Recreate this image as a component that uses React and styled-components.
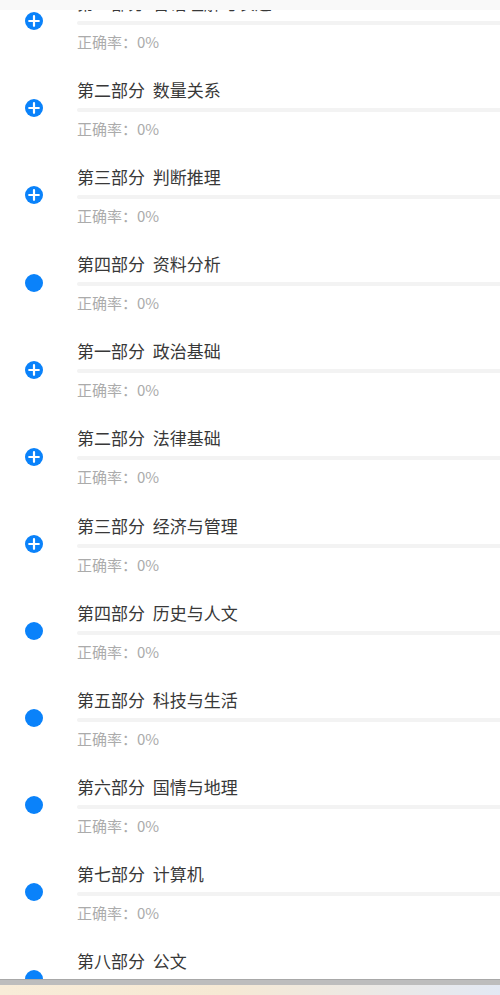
import React from 'react'
import styled, { createGlobalStyle } from 'styled-components';

const sections = [
  { title: '第一部分 言语理解与表达', plus: true },
  { title: '第二部分 数量关系', plus: true },
  { title: '第三部分 判断推理', plus: true },
  { title: '第四部分 资料分析', plus: false },
  { title: '第一部分 政治基础', plus: true },
  { title: '第二部分 法律基础', plus: true },
  { title: '第三部分 经济与管理', plus: true },
  { title: '第四部分 历史与人文', plus: false },
  { title: '第五部分 科技与生活', plus: false },
  { title: '第六部分 国情与地理', plus: false },
  { title: '第七部分 计算机', plus: false },
  { title: '第八部分 公文', plus: false },
];

function PlusDot({ plus }) {
  return (
    <Dot>
      {plus && (
        <svg width="18" height="18" viewBox="0 0 18 18">
          <path d="M9 4.2v9.6M4.2 9h9.6" stroke="#fff" strokeWidth="2.2" strokeLinecap="round" />
        </svg>
      )}
    </Dot>
  )
}

function App() {
  return (
    <>
      <GlobalStyle />
      <Page>
        <TopBar />
        <Scroller>
          <List>
            {sections.map((s, i) => (
              <Item key={i}>
                <IconCol>
                  <PlusDot plus={s.plus} />
                </IconCol>
                <Body>
                  <Title>{s.title}</Title>
                  <Track />
                  <Rate>正确率：0%</Rate>
                </Body>
              </Item>
            ))}
          </List>
        </Scroller>
        <BottomBar />
      </Page>
    </>
  )
}

export default App

const GlobalStyle = createGlobalStyle`
  html, body {
    margin: 0;
    padding: 0;
    background: #fff;
    font-family: "Noto Sans CJK SC", "Noto Sans", sans-serif;
  }
`

const Page = styled.div`
  width: 500px;
  height: 995px;
  display: flex;
  flex-direction: column;
  overflow: hidden;
  background: #fff;
`

const TopBar = styled.div`
  height: 10px;
  flex-shrink: 0;
  background: #f9f9f9;
  position: relative;
  z-index: 1;
`

const Scroller = styled.div`
  flex: 1;
  overflow: hidden;
`

const List = styled.div`
  margin-top: -19px;
`

const Item = styled.div`
  height: 87.1px;
  display: flex;
`

const IconCol = styled.div`
  width: 77px;
  flex-shrink: 0;
  display: flex;
  justify-content: center;
  padding: 21.3px 9px 0 0;
  box-sizing: border-box;
`

const Dot = styled.div`
  width: 18px;
  height: 18px;
  border-radius: 50%;
  background: #0a82fa;
  display: flex;
  align-items: center;
  justify-content: center;
`

const Body = styled.div`
  flex: 1;
  display: flex;
  flex-direction: column;
`

const Title = styled.div`
  font-size: 17px;
  line-height: 24px;
  color: #383838;
  word-spacing: 4px;
  white-space: nowrap;
`

const Track = styled.div`
  margin-top: 6px;
  height: 4px;
  background: #f3f3f3;
  border-radius: 2px 0 0 2px;
`

const Rate = styled.div`
  margin-top: 6px;
  font-size: 15px;
  line-height: 22px;
  color: #ababab;
`

const BottomBar = styled.div`
  height: 16px;
  flex-shrink: 0;
  border-top: 1px solid #a8a8a8;
  box-sizing: border-box;
  background:
    linear-gradient(#bdbdbd, #bdbdbd) top / 100% 5px no-repeat,
    linear-gradient(90deg, #f8ecd8 0%, #f6e9d4 45%, #e3e9f4 100%);
`
